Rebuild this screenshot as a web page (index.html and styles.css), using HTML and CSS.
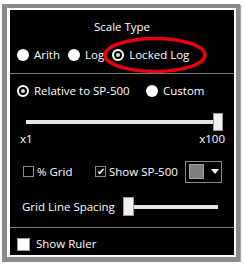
FILE: index.html
```html
<!DOCTYPE html>
<html lang="en">
<head>
    <meta charset="UTF-8">
    <title>Scale Type</title>
    <link rel="stylesheet" href="styles.css">
</head>
<body>
    <div class="frame">
        <div class="panel">
            <div class="section top">
                <div class="title">Scale Type</div>
                <div class="row scale-row">
                    <label class="opt"><span class="radio"></span>Arith</label>
                    <label class="opt"><span class="radio"></span>Log</label>
                    <label class="opt"><span class="radio on"></span>Locked Log</label>
                </div>
                <svg class="circled" width="106" height="40" viewBox="0 0 106 40">
                    <ellipse cx="53" cy="20" rx="50" ry="16.5" fill="none" stroke="#e8000b" stroke-width="3.5"/>
                </svg>
            </div>
            <div class="section mid">
                <div class="row relative-row">
                    <label class="opt relative-opt"><span class="radio on"></span>Relative to SP-500</label>
                    <label class="opt"><span class="radio"></span>Custom</label>
                </div>
                <div class="slider wide">
                    <div class="track"></div>
                    <div class="thumb"></div>
                </div>
                <div class="scale-labels">
                    <span>x1</span>
                    <span>x100</span>
                </div>
                <div class="row check-row">
                    <label class="opt grid-opt"><span class="box"></span>% Grid</label>
                    <label class="opt"><span class="box checked">&#10004;</span>Show SP-500</label>
                    <div class="dropdown">
                        <span class="swatch"></span>
                        <span class="arrow"></span>
                    </div>
                </div>
                <div class="row spacing-row">
                    <span class="label">Grid Line Spacing</span>
                    <div class="slider short">
                        <div class="thumb"></div>
                        <div class="track"></div>
                    </div>
                </div>
            </div>
            <div class="section bottom">
                <label class="opt"><span class="box white"></span>Show Ruler</label>
            </div>
        </div>
    </div>
</body>
</html>
```

FILE: styles.css
```css
body {
    margin: 0;
    background: #fff;
    font-family: "Open Sans", "Noto Sans", sans-serif;
    font-size: 11.5px;
    color: #fff;
}
.frame {
    margin: 4px 0 0 2px;
    width: 238px;
    height: 258px;
    box-sizing: border-box;
    border-style: solid;
    border-color: #8a8a8a;
    border-width: 4px 4px 5px 5px;
    box-shadow: 1px 1px 1px rgba(0,0,0,0.35);
}
.panel {
    height: 100%;
    box-sizing: border-box;
    background: #000;
    border-style: solid;
    border-color: #fff;
    border-width: 2px 2px 2px 3px;
    display: flex;
    flex-direction: column;
}
.section {
    border-bottom: 1px solid #7a7a7a;
}
.top {
    position: relative;
    height: 63px;
}
.title {
    text-align: center;
    padding-top: 9px;
    height: 16px;
    line-height: 16px;
}
.row {
    display: flex;
    align-items: center;
}
.scale-row {
    margin-top: 12px;
    padding-left: 7px;
    gap: 8px;
}
.opt {
    display: flex;
    align-items: center;
    height: 16px;
    line-height: 16px;
}
.radio {
    width: 12px;
    height: 12px;
    border-radius: 50%;
    background: #fff;
    margin-right: 5px;
    box-sizing: border-box;
    position: relative;
}
.radio.on {
    background: #000;
    border: 2px solid #fff;
}
.radio.on::after {
    content: "";
    position: absolute;
    left: 2px;
    top: 2px;
    width: 4px;
    height: 4px;
    border-radius: 50%;
    background: #ddd;
}
.circled {
    position: absolute;
    left: 92px;
    top: 25px;
}
.mid {
    height: 153px;
}
.relative-row {
    margin-top: 9px;
    padding-left: 7px;
}
.relative-opt {
    width: 129px;
}
.slider {
    display: flex;
    align-items: center;
}
.track {
    height: 4px;
    background: #e5e5e5;
    flex: 1;
}
.thumb {
    width: 8px;
    height: 16px;
    background: #f0f0f0;
    border: 1px solid #9a9a9a;
}
.wide {
    margin: 14px 0 0 16px;
    width: 197px;
}
.scale-labels {
    display: flex;
    justify-content: space-between;
    margin: 1px 9px 0 10px;
    height: 14px;
    line-height: 14px;
}
.check-row {
    margin-top: 14px;
    height: 23px;
    padding-left: 13px;
}
.box {
    width: 11px;
    height: 11px;
    box-sizing: border-box;
    border: 1px solid #8a8a8a;
    margin-right: 3px;
    font-size: 10px;
    line-height: 9px;
    text-align: center;
    color: #fff;
}
.grid-opt {
    width: 72px;
}
.box.white {
    width: 13px;
    height: 13px;
    background: #fff;
    border-color: #999;
    margin-right: 6px;
}
.dropdown {
    margin-left: 7px;
    width: 37px;
    height: 22px;
    box-sizing: border-box;
    border: 1px solid #8a8a8a;
    display: flex;
    align-items: center;
    padding-left: 3px;
}
.swatch {
    width: 15px;
    height: 15px;
    box-sizing: border-box;
    background: #7e7e7e;
    border: 1px solid #a0a0a0;
}
.arrow {
    margin-left: 7px;
    width: 0;
    height: 0;
    border-left: 4px solid transparent;
    border-right: 4px solid transparent;
    border-top: 5px solid #fff;
}
.spacing-row {
    margin-top: 14px;
    padding-left: 12px;
}
.short {
    margin-left: 8px;
    width: 95px;
}
.short .thumb {
    width: 9px;
    height: 17px;
}
.bottom {
    border-bottom: none;
    padding: 8px 0 0 7px;
}
```
